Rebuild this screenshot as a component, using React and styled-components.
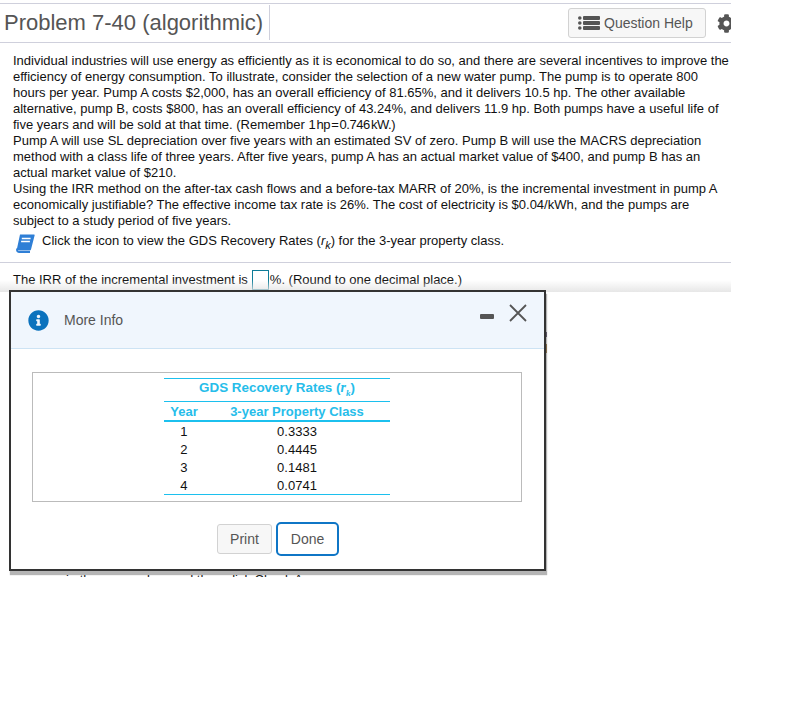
import React from "react";
import styled, { createGlobalStyle } from "styled-components";
import { FaCog, FaInfoCircle } from "react-icons/fa";

const Global = createGlobalStyle`
  html, body { margin: 0; padding: 0; background: #fff; }
  body { font-family: "Liberation Sans", Arial, sans-serif; color: #000; }
`;

const Page = styled.div`
  position: relative;
  width: 731px;
  height: 720px;
  padding-top: 3px;
  box-sizing: border-box;
  overflow: hidden;
`;

const Header = styled.header`
  display: flex;
  align-items: stretch;
  height: 38px;
  border-top: 1px solid #cfd0dc;
  border-bottom: 1px solid #cfd0dc;
`;

const Title = styled.h1`
  margin: 1px 0 2px;
  padding: 0 5px 0 4px;
  width: 260px;
  font-size: 22px;
  font-weight: 400;
  line-height: 36px;
  color: #555;
  border-right: 1px solid #cfd0dc;
  white-space: nowrap;
`;

const Tools = styled.div`
  flex: 1;
  display: flex;
  justify-content: flex-end;
  align-items: center;
  gap: 11px;
  margin-right: -5px;
`;

const HelpButton = styled.button`
  display: flex;
  align-items: center;
  gap: 4px;
  width: 138px;
  height: 30px;
  padding: 0 0 0 9px;
  box-sizing: border-box;
  background: #f7f7f7;
  border: 1px solid #d2d2d2;
  border-radius: 3px;
  font: 14px "Liberation Sans", Arial, sans-serif;
  color: #555;
`;

const Gear = styled(FaCog)`
  width: 19px;
  height: 19px;
  color: #555;
`;

const Body = styled.div`
  padding: 10px 0 0 13px;
  font-size: 13px;
  line-height: 16px;
  color: #111;
`;

const Para = styled.p`
  margin: 0;
  white-space: nowrap;
`;

const TightMath = styled.span`
  word-spacing: -2px;
  letter-spacing: -0.45px;
`;

const IconLine = styled.div`
  display: flex;
  align-items: center;
  gap: 7px;
  margin: 5px 0 0 2px;
  height: 18px;
  white-space: nowrap;
`;

const Rule = styled.hr`
  margin: 10px 0 0;
  border: 0;
  border-top: 1px solid #cfd0dc;
`;

const AnswerLine = styled.div`
  display: flex;
  align-items: center;
  height: 18px;
  margin: 7px 0 0 13px;
  font-size: 13px;
  white-space: nowrap;
  color: #111;
`;

const AnswerBox = styled.span`
  flex: none;
  width: 15px;
  height: 18px;
  margin: 2px 1px 0 4px;
  border: 1px solid #0e7c98;
`;

const BehindLine = styled.div`
  margin: 284px 0 0 66px;
  height: 5px;
  overflow: hidden;
  font-size: 13px;
  line-height: 16px;
  color: #111;
  white-space: nowrap;
`;

const Veil = styled.div`
  position: absolute;
  left: 0;
  right: 0;
  top: 280px;
  height: 12px;
  background: linear-gradient(to bottom, rgba(255,255,255,0), rgba(228,228,228,0.9));
`;

const Sliver = styled.div`
  position: absolute;
  left: 546px;
  top: 332px;
  width: 1px;
  height: 21px;
  background: linear-gradient(to bottom, #33264a 0 5px, transparent 5px 12px, #8a5a12 12px);
`;

const Dialog = styled.section`
  position: absolute;
  left: 9px;
  top: 290px;
  width: 537px;
  height: 281px;
  box-sizing: border-box;
  background: #fff;
  border: 2px solid #333;
  box-shadow: 1px 4px 1px rgba(120, 120, 120, 0.55);
  display: flex;
  flex-direction: column;
`;

const DialogHead = styled.div`
  display: flex;
  align-items: center;
  flex: none;
  height: 57px;
  box-sizing: border-box;
  padding: 0 17px;
  background: #f0f6fd;
  border-bottom: 1px solid #cde3f4;
  color: #555;
  font-size: 14px;
  gap: 15px;
`;

const InfoIcon = styled(FaInfoCircle)`
  width: 21px;
  height: 21px;
  color: #0b72bd;
`;

const HeadTitle = styled.span`
  flex: 1;
`;

const WindowControls = styled.div`
  display: flex;
  align-items: center;
  gap: 15px;
  margin-top: -15px;
`;

const Minimize = styled.span`
  display: block;
  width: 14px;
  height: 5px;
  margin-top: 7px;
  background: #555;
  border-radius: 1px;
`;

const CloseIcon = styled.svg`
  width: 18px;
  height: 18px;
  stroke: #555;
  stroke-width: 1.8;
  fill: none;
`;

const Content = styled.div`
  flex: none;
  margin: 23px 22px 0 21px;
  height: 130px;
  border: 1px solid #bbb;
  display: flex;
  justify-content: center;
  box-sizing: border-box;
  padding: 5px 0 0;
`;

const RatesTable = styled.table`
  border-collapse: collapse;
  table-layout: fixed;
  width: 226px;
  height: 117px;
  font-size: 13px;
  color: #111;
  border-top: 1px solid #1cc0ee;
  border-bottom: 1px solid #1cc0ee;
`;

const Column = styled.col`
  width: ${(p) => p.$w}px;
`;

const Caption = styled.th`
  height: 23px;
  padding: 0 0 4px;
  box-sizing: border-box;
  color: #26bdea;
  font-weight: 700;
  font-size: 13.4px;
  border-bottom: 1px solid #1cc0ee;
  i { font-family: "Liberation Serif", serif; font-size: 14px; }
  sub { font-size: 9px; line-height: 0; }
`;

const ColHead = styled.th`
  height: 18px;
  padding: 0;
  color: #26bdea;
  font-weight: 700;
  font-size: 13px;
  white-space: nowrap;
  border-bottom: 2px solid #1cc0ee;
`;

const Cell = styled.td`
  height: 18px;
  padding: 0;
  text-align: center;
`;

const Footer = styled.div`
  display: flex;
  gap: 4px;
  margin: 20px 0 0 206px;
  align-items: center;
`;

const DlgButton = styled.button`
  height: 30px;
  width: 55px;
  padding: 0;
  background: #f7f7f7;
  border: 1px solid #d2d2d2;
  border-radius: 3px;
  font: 14px "Liberation Sans", Arial, sans-serif;
  color: #555;
`;

const DoneButton = styled(DlgButton)`
  width: 63px;
  height: 34px;
  background: #fff;
  border: 2px solid #0f76c6;
  border-radius: 5px;
`;

function ListIcon() {
  return (
    <svg width="22" height="14" viewBox="0 0 22 14" fill="#555">
      <circle cx="1.8" cy="2" r="1.8" />
      <circle cx="1.8" cy="7" r="1.8" />
      <circle cx="1.8" cy="12" r="1.8" />
      <rect x="5" y="0" width="17" height="4" rx="1" />
      <rect x="5" y="5" width="17" height="4" rx="1" />
      <rect x="5" y="10" width="17" height="4" rx="1" />
    </svg>
  );
}

function BookIcon() {
  return (
    <svg width="20" height="19" viewBox="0 0 20 19">
      <path d="M5 .5h13.8c.7 0 1 .5.8 1.1L16 15.5c-.2.6-.7 1-1.3 1H3c-.9 0-1.3-.7-1.1-1.4L5 .5z" fill="#2f7fd6" />
      <path d="M6.8 4.5h8.8M6.1 7.5h8.8" stroke="#fff" strokeWidth="1.4" />
      <path d="M2.2 14.6c-.7 1.8.2 3.4 1.8 3.4h11" stroke="#2f7fd6" strokeWidth="1.8" fill="none" />
    </svg>
  );
}

export default function App() {
  return (
    <>
      <Global />
      <Page>
        <Header>
          <Title>Problem 7-40 (algorithmic)</Title>
          <Tools>
            <HelpButton>
              <ListIcon />
              Question Help
            </HelpButton>
            <Gear />
          </Tools>
        </Header>
        <Body>
          <Para>Individual industries will use energy as efficiently as it is economical to do so, and there are several incentives to improve the</Para>
          <Para>efficiency of energy consumption. To illustrate, consider the selection of a new water pump. The pump is to operate 800</Para>
          <Para>hours per year. Pump A costs $2,000, has an overall efficiency of 81.65%, and it delivers 10.5 hp. The other available</Para>
          <Para>alternative, pump B, costs $800, has an overall efficiency of 43.24%, and delivers 11.9 hp. Both pumps have a useful life of</Para>
          <Para>five years and will be sold at that time. (Remember <TightMath>1 hp = 0.746 kW.</TightMath>)</Para>
          <Para>Pump A will use SL depreciation over five years with an estimated SV of zero. Pump B will use the MACRS depreciation</Para>
          <Para>method with a class life of three years. After five years, pump A has an actual market value of $400, and pump B has an</Para>
          <Para>actual market value of $210.</Para>
          <Para>Using the IRR method on the after-tax cash flows and a before-tax MARR of 20%, is the incremental investment in pump A</Para>
          <Para>economically justifiable? The effective income tax rate is 26%. The cost of electricity is $0.04/kWh, and the pumps are</Para>
          <Para>subject to a study period of five years.</Para>
          <IconLine>
            <BookIcon />
            <span>Click the icon to view the GDS Recovery Rates (<i>r<sub>k</sub></i>) for the 3-year property class.</span>
          </IconLine>
        </Body>
        <Rule />
        <AnswerLine>
          The IRR of the incremental investment is
          <AnswerBox />
          %. (Round to one decimal place.)
        </AnswerLine>
        <BehindLine>in the answer box and then click Check Answer.</BehindLine>
        <Veil />
        <Sliver />
        <Dialog>
          <DialogHead>
            <InfoIcon />
            <HeadTitle>More Info</HeadTitle>
            <WindowControls>
              <Minimize />
              <CloseIcon viewBox="0 0 18 18"><path d="M1 1l16 16M17 1L1 17" /></CloseIcon>
            </WindowControls>
          </DialogHead>
          <Content>
            <RatesTable>
              <colgroup><Column $w={40} /><Column $w={186} /></colgroup>
              <thead>
                <tr><Caption colSpan={2}>GDS Recovery Rates (<i>r<sub>k</sub></i>)</Caption></tr>
                <tr><ColHead>Year</ColHead><ColHead>3-year Property Class</ColHead></tr>
              </thead>
              <tbody>
                <tr><Cell>1</Cell><Cell>0.3333</Cell></tr>
                <tr><Cell>2</Cell><Cell>0.4445</Cell></tr>
                <tr><Cell>3</Cell><Cell>0.1481</Cell></tr>
                <tr><Cell>4</Cell><Cell>0.0741</Cell></tr>
              </tbody>
            </RatesTable>
          </Content>
          <Footer>
            <DlgButton>Print</DlgButton>
            <DoneButton>Done</DoneButton>
          </Footer>
        </Dialog>
      </Page>
    </>
  );
}
